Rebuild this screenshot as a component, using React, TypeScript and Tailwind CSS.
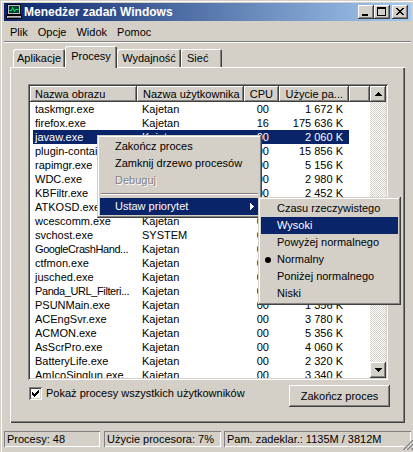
import type { ReactNode } from "react";

type Proc = { name: string; user: string; cpu: string; mem: string; tight?: boolean };

const procs: Proc[] = [
  { name: "taskmgr.exe", user: "Kajetan", cpu: "00", mem: "1 672 K" },
  { name: "firefox.exe", user: "Kajetan", cpu: "16", mem: "175 636 K" },
  { name: "javaw.exe", user: "Kajetan", cpu: "00", mem: "2 060 K" },
  { name: "plugin-container.exe", user: "Kajetan", cpu: "00", mem: "15 856 K" },
  { name: "rapimgr.exe", user: "Kajetan", cpu: "00", mem: "5 156 K" },
  { name: "WDC.exe", user: "Kajetan", cpu: "00", mem: "2 980 K" },
  { name: "KBFiltr.exe", user: "Kajetan", cpu: "00", mem: "2 452 K" },
  { name: "ATKOSD.exe", user: "Kajetan", cpu: "00", mem: "3 112 K" },
  { name: "wcescomm.exe", user: "Kajetan", cpu: "00", mem: "4 248 K" },
  { name: "svchost.exe", user: "SYSTEM", cpu: "00", mem: "3 904 K" },
  { name: "GoogleCrashHand...", user: "Kajetan", cpu: "00", mem: "1 020 K", tight: true },
  { name: "ctfmon.exe", user: "Kajetan", cpu: "00", mem: "3 560 K" },
  { name: "jusched.exe", user: "Kajetan", cpu: "00", mem: "1 748 K" },
  { name: "Panda_URL_Filteri...", user: "Kajetan", cpu: "00", mem: "6 204 K", tight: true },
  { name: "PSUNMain.exe", user: "Kajetan", cpu: "00", mem: "1 356 K" },
  { name: "ACEngSvr.exe", user: "Kajetan", cpu: "00", mem: "3 780 K" },
  { name: "ACMON.exe", user: "Kajetan", cpu: "00", mem: "5 356 K" },
  { name: "AsScrPro.exe", user: "Kajetan", cpu: "00", mem: "4 060 K" },
  { name: "BatteryLife.exe", user: "Kajetan", cpu: "00", mem: "2 320 K" },
  { name: "AmIcoSinglun.exe", user: "Kajetan", cpu: "00", mem: "3 340 K" },
];

const SELECTED = 2;

// classic 3D bevels
const raised =
  "shadow-[inset_-1px_-1px_#404040,inset_1px_1px_#ffffff,inset_-2px_-2px_#808080,inset_2px_2px_#d4d0c8]";
const popup =
  "shadow-[inset_-1px_-1px_#404040,inset_1px_1px_#d4d0c8,inset_-2px_-2px_#808080,inset_2px_2px_#ffffff]";
const sunken =
  "shadow-[inset_1px_1px_#808080,inset_-1px_-1px_#ffffff,inset_2px_2px_#404040,inset_-2px_-2px_#d4d0c8]";
const headerCell = "shadow-[inset_-1px_-1px_#404040,inset_1px_1px_#ffffff,inset_-2px_-2px_#808080]";
const pane = "shadow-[inset_1px_1px_#808080,inset_-1px_-1px_#ffffff]";

type Rect = [number, number, number, number];

function Pix({ w, h, rects, color = "#000" }: { w: number; h: number; rects: Rect[]; color?: string }) {
  return (
    <svg width={w} height={h} viewBox={`0 0 ${w} ${h}`} shapeRendering="crispEdges" className="block">
      {rects.map(([x, y, rw, rh], i) => (
        <rect key={i} x={x} y={y} width={rw} height={rh} fill={color} />
      ))}
    </svg>
  );
}

const closeGlyph: Rect[] = [
  [0, 0, 2, 1], [6, 0, 2, 1],
  [1, 1, 2, 1], [5, 1, 2, 1],
  [2, 2, 4, 1],
  [3, 3, 2, 1],
  [2, 4, 4, 1],
  [1, 5, 2, 1], [5, 5, 2, 1],
  [0, 6, 2, 1], [6, 6, 2, 1],
];
const maxGlyph: Rect[] = [[0, 0, 9, 2], [0, 0, 1, 9], [8, 0, 1, 9], [0, 8, 9, 1]];
const upArrow: Rect[] = [[3, 0, 1, 1], [2, 1, 3, 1], [1, 2, 5, 1], [0, 3, 7, 1]];
const downArrow: Rect[] = [[0, 0, 7, 1], [1, 1, 5, 1], [2, 2, 3, 1], [3, 3, 1, 1]];
const rightArrow: Rect[] = [[0, 0, 1, 7], [1, 1, 1, 5], [2, 2, 1, 3], [3, 3, 1, 1]];
const checkGlyph: Rect[] = [
  [6, 0, 1, 1], [5, 1, 2, 1], [0, 2, 1, 1], [4, 2, 3, 1],
  [0, 3, 2, 1], [3, 3, 3, 1], [0, 4, 5, 1], [1, 5, 3, 1], [2, 6, 1, 1],
];

function TaskIcon() {
  return (
    <svg width="16" height="16" viewBox="0 0 16 16" shapeRendering="crispEdges" className="block">
      <rect x="1.5" y="0.5" width="13" height="10" fill="#c0c0c0" stroke="#000" />
      <rect x="3" y="2" width="10" height="7" fill="#003c3c" />
      <polyline points="3.5,6.5 5.5,6.5 6.5,3.5 8.5,7.5 9.5,5.5 12.5,5.5" fill="none" stroke="#00ff40" strokeWidth="1" shapeRendering="auto" />
      <rect x="0.5" y="11.5" width="15" height="3" fill="#c0c0c0" stroke="#000" />
      <rect x="2" y="13" width="12" height="1" fill="#808080" />
    </svg>
  );
}

function TitleButton({ children }: { children: ReactNode }) {
  return <div className={`relative h-[14px] w-[16px] bg-[#d4d0c8] ${raised}`}>{children}</div>;
}

function MenuRow({
  label,
  active,
  disabled,
  arrow,
  bullet,
  pad,
}: {
  label: string;
  active?: boolean;
  disabled?: boolean;
  arrow?: boolean;
  bullet?: boolean;
  pad: string;
}) {
  return (
    <div
      className={`relative flex h-[17px] items-center ${pad} ${
        active ? "bg-[#0a246a] text-white" : disabled ? "text-[#808080] [text-shadow:1px_1px_0_#ffffff]" : "text-black"
      }`}
    >
      {bullet && <div className="absolute left-[4px] top-[6px] h-[6px] w-[6px] rounded-full bg-black" />}
      <span>{label}</span>
      {arrow && (
        <div className="absolute right-[5px] top-[5px]">
          <Pix w={4} h={7} rects={rightArrow} color={active ? "#fff" : "#000"} />
        </div>
      )}
    </div>
  );
}

function MenuSeparator() {
  return (
    <div className="flex h-[9px] items-center px-[1px]">
      <div className="h-[2px] w-full border-t border-b border-t-[#808080] border-b-white" />
    </div>
  );
}

function ProcessList() {
  return (
    <div className={`flex h-[296px] w-[360px] bg-white p-[2px] ${sunken}`}>
      <div className="flex min-w-0 flex-1 flex-col overflow-hidden">
        <div className="flex h-[16px] shrink-0 bg-[#d4d0c8]">
          <div className={`flex w-[107px] items-center pl-[5px] ${headerCell}`}>Nazwa obrazu</div>
          <div className={`flex w-[107px] items-center pl-[6px] ${headerCell}`}>Nazwa użytkownika</div>
          <div className={`flex w-[35px] items-center justify-end pr-[6px] ${headerCell}`}>CPU</div>
          <div className={`flex w-[70px] items-center justify-end pr-[6px] ${headerCell}`}>Użycie pa...</div>
          <div className={`flex-1 ${headerCell}`} />
        </div>
        {procs.map((p, i) => {
          const sel = i === SELECTED;
          return (
            <div key={p.name} className="flex h-[14px] shrink-0 pl-[3px]">
              <div className={`flex items-center ${sel ? "bg-[#0a246a] text-white" : ""}`}>
                <div
                  className={`w-[104px] overflow-hidden whitespace-nowrap pl-[2px] ${p.tight ? "tracking-[-0.4px]" : ""}`}
                >
                  {p.name}
                </div>
                <div className="w-[107px] whitespace-nowrap pl-[5px]">{p.user}</div>
                <div className="w-[35px] pr-[10px] text-right">{p.cpu}</div>
                <div className="w-[70px] whitespace-nowrap pr-[6px] text-right">{p.mem}</div>
              </div>
            </div>
          );
        })}
      </div>
      {/* vertical scrollbar */}
      <div className="flex w-[16px] flex-col">
        <div className={`flex h-[16px] items-center justify-center bg-[#d4d0c8] ${raised}`}>
          <Pix w={7} h={4} rects={upArrow} />
        </div>
        <div className="flex-1 bg-[image:repeating-conic-gradient(#ffffff_0_25%,#d4d0c8_0_50%)] bg-[length:2px_2px]" />
        <div className={`flex h-[16px] items-center justify-center bg-[#d4d0c8] ${raised}`}>
          <Pix w={7} h={4} rects={downArrow} />
        </div>
      </div>
    </div>
  );
}

export default function App() {
  return (
    <div className="relative h-[452px] w-[413px] select-none overflow-hidden bg-[#d4d0c8] font-['Liberation_Sans',Arial,sans-serif] text-[11px] leading-none text-black">
      <div className="flex h-full flex-col pb-[5px] pl-[4px] pr-[2px] pt-[3px] shadow-[inset_1px_1px_#d4d0c8,inset_2px_2px_#ffffff]">
        {/* title bar */}
        <div className="flex h-[18px] shrink-0 items-center bg-[linear-gradient(to_right,#0a246a,#a6caf0)] pl-[2px] pr-[3px]">
          <TaskIcon />
          <span className="ml-[2px] text-[12px] font-bold text-white">Menedżer zadań Windows</span>
          <div className="ml-auto flex items-center">
            <TitleButton>
              <div className="absolute left-[4px] top-[9px] h-[2px] w-[6px] bg-black" />
            </TitleButton>
            <TitleButton>
              <div className="absolute left-[3px] top-[2px]">
                <Pix w={9} h={9} rects={maxGlyph} />
              </div>
            </TitleButton>
            <div className="w-[2px]" />
            <TitleButton>
              <div className="absolute left-[4px] top-[3px]">
                <Pix w={8} h={7} rects={closeGlyph} />
              </div>
            </TitleButton>
          </div>
        </div>

        {/* menu bar */}
        <div className="flex h-[20px] shrink-0 items-center pl-[1px] pt-[2px]">
          {["Plik", "Opcje", "Widok", "Pomoc"].map((m) => (
            <span key={m} className="px-[5px]">
              {m}
            </span>
          ))}
        </div>
        <div className="h-[2px] shrink-0 border-t border-b border-t-[#808080] border-b-white" />

        {/* tabs */}
        <div className="ml-[6px] mr-[6px] mt-[3px] flex flex-col">
          <div className="flex h-[21px] items-end pl-[3px]">
            <div className="flex h-[18px] w-[52px] items-center justify-center rounded-t-[2px] shadow-[inset_1px_1px_#ffffff,inset_-1px_0_#404040,inset_-2px_0_#808080]">
              Aplikacje
            </div>
            <div className="relative z-10 -mb-[1px] flex h-[22px] w-[52px] items-start justify-center rounded-t-[2px] bg-[#d4d0c8] pt-[5px] shadow-[inset_1px_1px_#ffffff,inset_-1px_0_#404040,inset_-2px_0_#808080]">
              Procesy
            </div>
            <div className="flex h-[18px] w-[64px] items-center justify-center rounded-t-[2px] shadow-[inset_1px_1px_#ffffff,inset_-1px_0_#404040,inset_-2px_0_#808080]">
              Wydajność
            </div>
            <div className="flex h-[18px] w-[41px] items-center rounded-t-[2px] pl-[6px] shadow-[inset_1px_1px_#ffffff,inset_-1px_0_#404040,inset_-2px_0_#808080]">
              Sieć
            </div>
          </div>

          <div className="flex h-[356px] flex-col pl-[18px] pt-[17px] shadow-[inset_1px_1px_#ffffff,inset_-1px_-1px_#404040,inset_-2px_-2px_#808080]">
            <ProcessList />
            <div className="mt-[5px] flex h-[22px] w-[362px] items-start">
              <div className="ml-[1px] mt-[2px] flex items-center">
                <div className={`flex h-[13px] w-[13px] items-center justify-center bg-white ${sunken}`}>
                  <Pix w={7} h={7} rects={checkGlyph} />
                </div>
                <span className="ml-[4px]">Pokaż procesy wszystkich użytkowników</span>
              </div>
              <div className={`ml-auto flex h-[22px] w-[101px] items-center justify-center bg-[#d4d0c8] ${raised}`}>
                Zakończ proces
              </div>
            </div>
          </div>
        </div>

        {/* status bar */}
        <div className="mt-[8px] flex h-[16px] shrink-0">
          <div className={`flex w-[96px] items-center pl-[3px] ${pane}`}>Procesy: 48</div>
          <div className={`ml-[4px] flex w-[117px] items-center pl-[3px] ${pane}`}>Użycie procesora: 7%</div>
          <div className={`ml-[3px] flex flex-1 items-center pl-[3px] ${pane}`}>Pam. zadeklar.: 1135M / 3812M</div>
        </div>
      </div>

      {/* size grip */}
      <svg width="12" height="12" viewBox="0 0 12 12" className="absolute bottom-[2px] right-[0px]">
        {[0, 4, 8].map((o) => (
          <g key={o}>
            <line x1={o + 1} y1="12" x2="12" y2={o + 1} stroke="#ffffff" strokeWidth="1" />
            <line x1={o + 2} y1="12" x2="12" y2={o + 2} stroke="#808080" strokeWidth="1.4" />
          </g>
        ))}
      </svg>

      {/* process context menu */}
      <div className={`absolute left-[97px] top-[135px] z-20 w-[165px] bg-[#d4d0c8] p-[3px] ${popup}`}>
        <MenuRow label="Zakończ proces" pad="pl-[15px]" />
        <MenuRow label="Zamknij drzewo procesów" pad="pl-[15px]" />
        <MenuRow label="Debuguj" pad="pl-[15px]" disabled />
        <MenuSeparator />
        <MenuRow label="Ustaw priorytet" pad="pl-[15px]" active arrow />
      </div>

      {/* priority submenu */}
      <div className={`absolute left-[258px] top-[197px] z-30 w-[143px] bg-[#d4d0c8] p-[3px] ${popup}`}>
        <MenuRow label="Czasu rzeczywistego" pad="pl-[16px]" />
        <MenuRow label="Wysoki" pad="pl-[16px]" active />
        <MenuRow label="Powyżej normalnego" pad="pl-[16px]" />
        <MenuRow label="Normalny" pad="pl-[16px]" bullet />
        <MenuRow label="Poniżej normalnego" pad="pl-[16px]" />
        <MenuRow label="Niski" pad="pl-[16px]" />
      </div>
    </div>
  );
}
